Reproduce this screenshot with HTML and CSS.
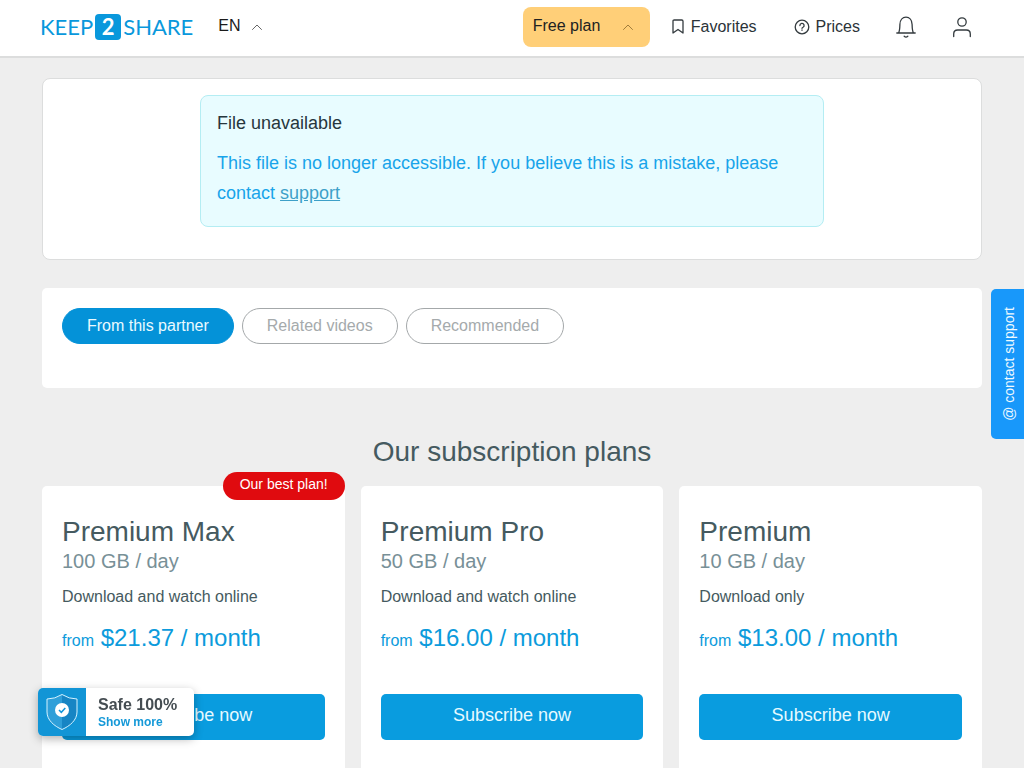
FILE: index.html
```html
<!DOCTYPE html>
<html lang="en">
<head>
<meta charset="utf-8">
<meta name="viewport" content="width=device-width, initial-scale=1">
<title>Keep2Share</title>
<link rel="stylesheet" href="styles.css">
</head>
<body>
<header class="header">
  <a class="logo" href="#" aria-label="Keep2Share"><span>KEEP</span><span class="logo-two">2</span><span>SHARE</span></a>
  <button class="lang" type="button">EN
    <svg class="caret" viewBox="0 0 10 6" aria-hidden="true"><path d="M.5 5.500 5 1l4.500 4.500"/></svg>
  </button>
  <nav class="nav">
    <button class="plan-button" type="button">Free plan
      <svg class="caret" viewBox="0 0 10 6" aria-hidden="true"><path d="M.5 5.500 5 1l4.500 4.500"/></svg>
    </button>
    <a class="nav-link favorites" href="#"><svg width="12" height="16" viewBox="0 0 12 16" aria-hidden="true"><path d="M1 2.200Q1 1 2.200 1h7.600Q11 1 11 2.200V14l-5-3.500L1 14Z"/></svg>Favorites</a>
    <a class="nav-link prices" href="#"><svg width="16" height="16" viewBox="0 0 16 16" aria-hidden="true"><circle cx="8" cy="8" r="6.800"/><path d="M5.900 6.500a2.100 2.100 0 1 1 3.100 1.800q-1 .4-1 1M8 11v.3"/></svg>Prices</a>
    <button class="icon-button bell" type="button" aria-label="Notifications"><svg width="20" height="22" viewBox="0 0 20 22" aria-hidden="true"><path d="M.8 17h18.400M2.500 17c1.300-2.200 1.300-4.500 1.400-8.500C4 4 6.500 1.200 10 1.200S16 4 16.100 8.500c.1 4 .1 6.300 1.400 8.500M8.200 20.300q1.800 1.600 3.600 0"/></svg></button>
    <button class="icon-button" type="button" aria-label="Account"><svg width="20" height="22" viewBox="0 0 20 22" aria-hidden="true"><circle cx="10" cy="6" r="4.200"/><path d="M1.700 20.500v-2.500q0-4 4-4h8.600q4 0 4 4v2.500"/></svg></button>
  </nav>
</header>
<main class="page">
  <section class="file-card">
    <div class="alert">
      <h1 class="alert-title">File unavailable</h1>
      <p class="alert-text">This file is no longer accessible. If you believe this is a mistake, please contact <a href="#">support</a></p>
    </div>
  </section>
  <section class="videos">
    <button class="tab tab-active" type="button">From this partner</button>
    <button class="tab" type="button">Related videos</button>
    <button class="tab" type="button">Recommended</button>
  </section>
  <h2 class="plans-title">Our subscription plans</h2>
  <section class="plans">
    <article class="plan">
      <span class="badge">Our best plan!</span>
      <h3 class="plan-name">Premium Max</h3>
      <p class="plan-traffic">100 GB / day</p>
      <p class="plan-info">Download and watch online</p>
      <p class="plan-price"><small>from</small> $21.37 / month</p>
      <button class="subscribe" type="button">Subscribe now</button>
    </article>
    <article class="plan">
      <h3 class="plan-name">Premium Pro</h3>
      <p class="plan-traffic">50 GB / day</p>
      <p class="plan-info">Download and watch online</p>
      <p class="plan-price"><small>from</small> $16.00 / month</p>
      <button class="subscribe" type="button">Subscribe now</button>
    </article>
    <article class="plan">
      <h3 class="plan-name">Premium</h3>
      <p class="plan-traffic">10 GB / day</p>
      <p class="plan-info">Download only</p>
      <p class="plan-price"><small>from</small> $13.00 / month</p>
      <button class="subscribe" type="button">Subscribe now</button>
    </article>
  </section>
</main>
<a class="support" href="#">@ contact support</a>
<aside class="safe">
  <span class="safe-icon"><svg width="32" height="38" viewBox="0 0 32 38" aria-hidden="true"><path fill="#1785c4" d="M16 1.500Q23 6 31 6v13c0 8-7 14-15 17.500C8 33 1 27 1 19V6q8 0 15-4.500Z"/><path fill="#2f9fd9" d="M16 1.500Q9 6 1 6v13c0 8 7 14 15 17.500Z"/><path fill="none" stroke="#d5f2ff" d="M16 1.500Q23 6 31 6v13c0 8-7 14-15 17.500C8 33 1 27 1 19V6q8 0 15-4.500Z"/><circle cx="16" cy="17" r="7" fill="#fff"/><path d="m13 17 2.300 2.300 4-4.300" fill="none" stroke="#1295da" stroke-width="1.500"/></svg></span>
  <span class="safe-body"><strong>Safe 100%</strong><a href="#">Show more</a></span>
</aside>
</body>
</html>
```
FILE: styles.css
```css
* { box-sizing: border-box; }
body {
  margin: 0;
  background: #eee;
  color: #455a60;
  font: 16px/24px "Liberation Sans", Arial, sans-serif;
  overflow: hidden;
}
h1, h2, h3, p { margin: 0; font-weight: 400; }
button { border: 0; background: none; padding: 0; font: inherit; color: inherit; cursor: pointer; }
svg { flex: none; }
.header {
  display: flex;
  align-items: center;
  height: 58px;
  padding: 0 42px 2px 40px;
  background: #fff;
  border-bottom: 2px solid #dcdddd;
  color: #2b3338;
}
.header svg { fill: none; stroke: #343b3f; stroke-width: 1.300; stroke-linejoin: round; stroke-linecap: round; }
.logo {
  display: flex;
  align-items: center;
  gap: 2px;
  color: #0998dc;
  font: 22px/26px Lato, sans-serif;
  text-decoration: none;
}
.logo-two {
  width: 26px;
  border-radius: 4px;
  background: #0998dc;
  color: #fff;
  font-weight: 700;
  text-align: center;
}
.lang { display: flex; align-items: center; gap: 11px; margin-left: 25px; padding-bottom: 2px; color: #1b1b1b; }
.header .caret { width: 10px; height: 6px; margin-top: 2px; stroke: #666; stroke-width: 1; }
.nav { display: flex; align-items: center; margin-left: auto; padding-right: 10px; }
.plan-button {
  display: flex;
  align-items: center;
  justify-content: space-between;
  width: 127px;
  height: 40px;
  padding: 0 17px 2px 10px;
  border-radius: 8px;
  background: #ffcf78;
  color: #222;
}
.header .plan-button .caret { stroke: #a07d3c; }
.nav-link { display: flex; align-items: center; gap: 7px; color: inherit; text-decoration: none; }
.favorites { margin-left: 22px; }
.prices { gap: 6px; margin-left: 37px; }
.icon-button { display: flex; }
.bell { margin: 0 36px; }
.page { padding: 20px 42px 0; }
.file-card { height: 182px; padding: 16px; border: 1px solid #dcdddd; border-radius: 8px; background: #fff; }
.alert {
  max-width: 624px;
  margin: 0 auto;
  padding: 12px 16px 18px;
  border: 1px solid #b4edf3;
  border-radius: 8px;
  background: #e8fcff;
  font-size: 18px;
  line-height: 30px;
}
.alert-title { margin-bottom: 10px; font-size: 18px; line-height: 30px; color: #26363d; }
.alert-text { color: #18a4ea; }
.alert-text a { color: #3da0c8; }
.videos { display: flex; align-items: flex-start; gap: 8px; height: 100px; margin-top: 28px; padding: 20px; border-radius: 5px; background: #fff; }
.tab { height: 36px; padding: 0 24px; border: 1px solid #a4a8aa; border-radius: 18px; color: #a5aaac; }
.tab-active { border-color: #0492d8; background: #0492d8; color: #eafaff; }
.plans-title { margin: 44px 0 14px; font-size: 28px; line-height: 40px; text-align: center; }
.plans { display: grid; grid-template-columns: repeat(3, 1fr); gap: 16px; }
.plan { position: relative; padding: 28px 20px 40px; border-radius: 5px; background: #fff; }
.plan-name { font-size: 28px; line-height: 36px; }
.plan-traffic { color: #789097; font-size: 20px; line-height: 22px; }
.plan-info { margin-top: 13px; }
.plan-price { margin-top: 13px; color: #0c9bdc; font-size: 24px; line-height: 32px; }
.plan-price small { font-size: 16px; }
.subscribe { width: 100%; height: 46px; margin-top: 37px; padding-bottom: 4px; border-radius: 5px; background: #099cdf; color: #e6faff; font-size: 18px; }
.badge {
  position: absolute;
  top: -14px;
  right: 0;
  min-width: 122px;
  padding: 0 16px 4px;
  border-radius: 14px;
  background: #e00b0f;
  color: #fff;
  font-size: 14px;
  text-align: center;
}
.support {
  position: fixed;
  top: 289px;
  right: 0;
  width: 33px;
  height: 150px;
  border-radius: 5px 0 0 5px;
  background: #1898fa;
  color: #f0faff;
  font-size: 14px;
  line-height: 36px;
  text-align: center;
  text-decoration: none;
  writing-mode: sideways-lr;
}
.safe {
  position: fixed;
  left: 38px;
  bottom: 32px;
  display: flex;
  width: 156px;
  height: 48px;
  overflow: hidden;
  border-radius: 5px;
  background: #fff;
  box-shadow: 0 3px 10px rgba(0, 0, 0, .3);
}
.safe-icon { display: flex; align-items: center; justify-content: center; width: 48px; background: #1295d6; }
.safe-body { display: flex; flex-direction: column; justify-content: center; padding: 2px 0 0 12px; font-size: 16px; line-height: 18px; color: #454d52; }
.safe-body a { color: #1599d8; font-size: 12px; line-height: 16px; font-weight: 700; text-decoration: none; }
```
